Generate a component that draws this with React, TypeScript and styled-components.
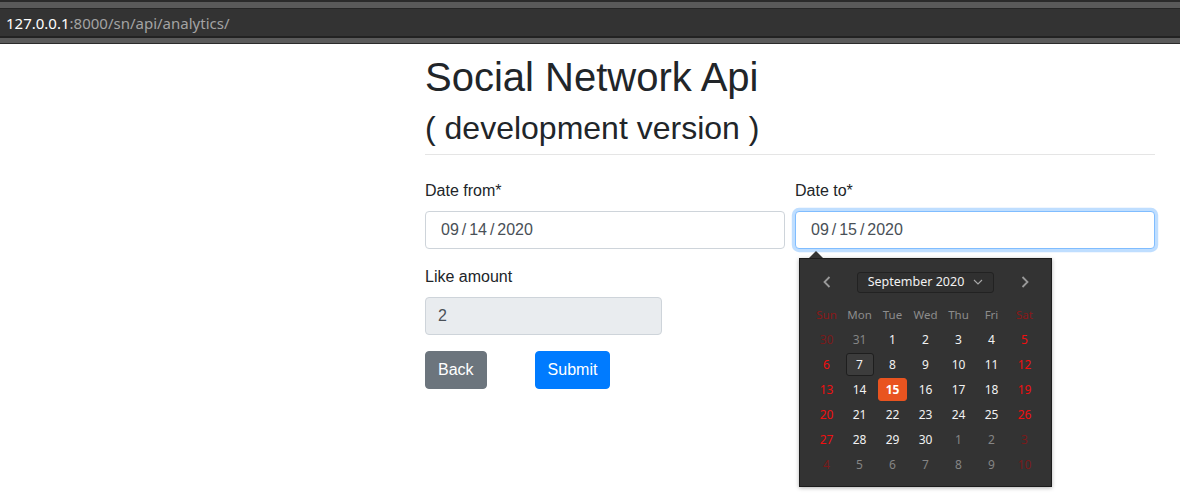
import React from "react";
import styled, { createGlobalStyle, css } from "styled-components";

const GlobalStyle = createGlobalStyle`
  * {
    box-sizing: border-box;
  }

  html,
  body {
    margin: 0;
    padding: 0;
    background: #ffffff;
  }

  html,
  body,
  #root {
    min-height: 100vh;
  }

  body {
    font-family: "Liberation Sans", Arial, sans-serif;
    font-size: 16px;
    line-height: 1.5;
    color: #212529;
  }
`;

const BrowserChrome = styled.div`
  background: #5a5a5a;
  border-top: 2px solid #2b2b2b;
  border-bottom: 1px solid #2b2b2b;
  padding: 6px 0 5px;
`;

const AddressBar = styled.div`
  height: 30px;
  display: flex;
  align-items: center;
  padding: 1px 0 0 6px;
  background: #333333;
  border-top: 1px solid #262626;
  border-bottom: 2px solid #222222;
  font-family: "Noto Sans", "DejaVu Sans", sans-serif;
  font-size: 15px;
  color: #a3a3a3;
`;

const Host = styled.span`
  color: #ffffff;
`;

const Page = styled.main`
  display: grid;
  grid-template-columns: 425px 730px;
  min-height: 456px;
`;

const Content = styled.div`
  grid-column: 2;
  padding-top: 9px;
`;

const Title = styled.h1`
  margin: 0 0 8px;
  font-size: 40px;
  font-weight: 400;
  line-height: 1.2;
`;

const Subtitle = styled.h2`
  margin: 0;
  font-size: 32px;
  font-weight: 400;
  line-height: 1.2;
`;

const Divider = styled.hr`
  margin: 7px 0 24px;
  border: 0;
  border-top: 1px solid rgba(0, 0, 0, 0.1);
`;

const FormRow = styled.div<{ $cols: number }>`
  display: grid;
  grid-template-columns: repeat(${(p) => p.$cols}, 1fr);
  column-gap: 10px;
`;

const FormGroup = styled.div`
  position: relative;
  margin-bottom: 16px;
`;

const Label = styled.label`
  display: block;
  margin-bottom: 8px;
  line-height: 24px;
`;

const Input = styled.div<{ $focused?: boolean; $readOnly?: boolean }>`
  display: flex;
  align-items: center;
  height: 38px;
  padding: 0 12px 0 15px;
  border: 1px solid #ced4da;
  border-radius: 4px;
  background: #ffffff;
  color: #495057;
  font-size: 16px;
  word-spacing: -1.5px;

  ${(p) =>
    p.$focused &&
    css`
      border-color: #80bdff;
      box-shadow: 0 0 0 3.2px rgba(0, 123, 255, 0.25);
    `}

  ${(p) =>
    p.$readOnly &&
    css`
      padding-left: 12px;
      background: #e9ecef;
    `}
`;

const Actions = styled.div`
  display: flex;
  gap: 48px;
`;

const Button = styled.button<{ $variant: "secondary" | "primary" }>`
  height: 38px;
  padding: 0 12px;
  border: 1px solid;
  border-radius: 4px;
  font-family: inherit;
  font-size: 16px;
  color: #ffffff;
  background: ${(p) => (p.$variant === "primary" ? "#007bff" : "#6c757d")};
  border-color: ${(p) => (p.$variant === "primary" ? "#007bff" : "#6c757d")};
`;

const Picker = styled.div`
  position: absolute;
  top: 79px;
  left: 4px;
  z-index: 10;
  width: 253px;
  height: 229px;
  padding: 11px 10px 0;
  background: #333333;
  border: 1px solid #1c1c1c;
  box-shadow: 0 1px 4px rgba(0, 0, 0, 0.3);
  font-family: "Noto Sans", "DejaVu Sans", sans-serif;
  font-size: 12px;
  line-height: 1;

  &::before {
    content: "";
    position: absolute;
    top: -8px;
    left: 9px;
    border-left: 7px solid transparent;
    border-right: 7px solid transparent;
    border-bottom: 7px solid #333333;
  }
`;

const PickerHeader = styled.div`
  display: grid;
  grid-template-columns: 33px 1fr 33px;
  align-items: center;
  height: 24px;
`;

const NavArrow = styled.span`
  display: flex;
  justify-content: center;
  color: #9a9a9a;
`;

const MonthSelect = styled.div`
  justify-self: center;
  display: flex;
  align-items: center;
  justify-content: center;
  gap: 9px;
  width: 137px;
  height: 21px;
  border: 1px solid #222222;
  border-radius: 3px;
  background: #303030;
  color: #f2f2f2;
  font-size: 12.5px;
`;

const Grid = styled.div`
  display: grid;
  grid-template-columns: repeat(7, 33px);
  grid-auto-rows: 25px;
`;

const WeekDays = styled(Grid)`
  margin-top: 8px;
`;

const WeekDay = styled.span<{ $weekend: boolean }>`
  display: flex;
  align-items: center;
  justify-content: center;
  font-size: 11.5px;
  color: ${(p) => (p.$weekend ? "#8a1818" : "#8c8c8c")};
`;

const DayCell = styled.span`
  display: flex;
  align-items: center;
  justify-content: center;
`;

const Day = styled.span<{
  $weekend: boolean;
  $outside: boolean;
  $mark?: "today" | "selected";
}>`
  display: flex;
  align-items: center;
  justify-content: center;
  width: 29px;
  height: 23px;
  border-radius: 3px;
  border: 1px solid transparent;
  font-size: 12px;
  color: ${(p) =>
    p.$outside
      ? p.$weekend
        ? "#7a1a1a"
        : "#858585"
      : p.$weekend
      ? "#f00f0f"
      : "#f2f2f2"};

  ${(p) =>
    p.$mark === "today" &&
    css`
      width: 28px;
      background: #3c3c3c;
      border-color: #1e1e1e;
    `}

  ${(p) =>
    p.$mark === "selected" &&
    css`
      background: #e95420;
      border-color: #e95420;
      color: #ffffff;
      font-weight: 700;
    `}
`;

const Chevron = ({ dir }: { dir: "left" | "right" }) => (
  <svg width="8" height="12" viewBox="0 0 8 12">
    <polyline
      points={dir === "left" ? "6.5,1 1.5,6 6.5,11" : "1.5,1 6.5,6 1.5,11"}
      fill="none"
      stroke="currentColor"
      strokeWidth="1.8"
    />
  </svg>
);

const ChevronDown = () => (
  <svg width="10" height="6" viewBox="0 0 10 6">
    <polyline points="1,1 5,5 9,1" fill="none" stroke="#a8a8a8" strokeWidth="1.1" />
  </svg>
);

const weekDays = ["Sun", "Mon", "Tue", "Wed", "Thu", "Fri", "Sat"];

const weeks = [
  [30, 31, 1, 2, 3, 4, 5],
  [6, 7, 8, 9, 10, 11, 12],
  [13, 14, 15, 16, 17, 18, 19],
  [20, 21, 22, 23, 24, 25, 26],
  [27, 28, 29, 30, 1, 2, 3],
  [4, 5, 6, 7, 8, 9, 10],
];

const isOutside = (row: number, day: number) =>
  (row === 0 && day > 20) || (row >= 4 && day < 15);

const DatePicker = () => (
  <Picker>
    <PickerHeader>
      <NavArrow>
        <Chevron dir="left" />
      </NavArrow>
      <MonthSelect>
        <span>September 2020</span>
        <ChevronDown />
      </MonthSelect>
      <NavArrow>
        <Chevron dir="right" />
      </NavArrow>
    </PickerHeader>
    <WeekDays>
      {weekDays.map((d, i) => (
        <WeekDay key={d} $weekend={i === 0 || i === 6}>
          {d}
        </WeekDay>
      ))}
    </WeekDays>
    <Grid>
      {weeks.map((week, r) =>
        week.map((day, c) => {
          const outside = isOutside(r, day);
          const mark =
            !outside && day === 7 ? "today" : !outside && day === 15 ? "selected" : undefined;
          return (
            <DayCell key={`${r}-${c}`}>
              <Day $weekend={c === 0 || c === 6} $outside={outside} $mark={mark}>
                {day}
              </Day>
            </DayCell>
          );
        })
      )}
    </Grid>
  </Picker>
);

export default function App() {
  return (
    <>
      <GlobalStyle />
      <BrowserChrome>
        <AddressBar>
          <Host>127.0.0.1</Host>:8000/sn/api/analytics/
        </AddressBar>
      </BrowserChrome>
      <Page>
        <Content>
          <Title>Social Network Api</Title>
          <Subtitle>( development version )</Subtitle>
          <Divider />
          <FormRow $cols={2}>
            <FormGroup>
              <Label>Date from*</Label>
              <Input>09 / 14 / 2020</Input>
            </FormGroup>
            <FormGroup>
              <Label>Date to*</Label>
              <Input $focused>09 / 15 / 2020</Input>
              <DatePicker />
            </FormGroup>
          </FormRow>
          <FormRow $cols={3}>
            <FormGroup>
              <Label>Like amount</Label>
              <Input $readOnly>2</Input>
            </FormGroup>
          </FormRow>
          <Actions>
            <Button $variant="secondary">Back</Button>
            <Button $variant="primary">Submit</Button>
          </Actions>
        </Content>
      </Page>
    </>
  );
}
